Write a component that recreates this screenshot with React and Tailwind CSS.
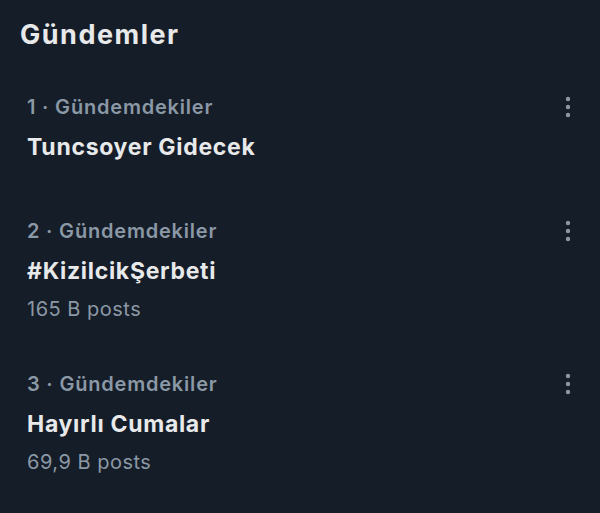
import { useState } from "react";

const trends = [
  { rank: 1, title: "Tuncsoyer Gidecek", posts: null, pad: "pt-[17px]" },
  { rank: 2, title: "#KizilcikŞerbeti", posts: "165 B posts", pad: "pt-[44px]" },
  { rank: 3, title: "Hayırlı Cumalar", posts: "69,9 B posts", pad: "pt-[37px]" },
];

function MoreDots() {
  return (
    <svg width="8" height="24" viewBox="0 0 8 24" className="text-[#8b98a5]">
      <circle cx="4" cy="4" r="2.2" fill="currentColor" />
      <circle cx="4" cy="12" r="2.2" fill="currentColor" />
      <circle cx="4" cy="20" r="2.2" fill="currentColor" />
    </svg>
  );
}

function TrendRow({ trend }) {
  return (
    <div className={`flex items-start justify-between pl-[27px] pr-[28px] ${trend.pad}`}>
      <div className="flex flex-col">
        <div className="text-[20px] leading-[40px] font-semibold tracking-[0.8px] text-[#8b98a5]">
          {trend.rank} · Gündemdekiler
        </div>
        <div className="text-[23px] leading-[40px] font-bold tracking-[0.7px] text-[#e7e9ea]">
          {trend.title}
        </div>
        {trend.posts && (
          <div className="text-[20px] leading-[36px] tracking-[0.5px] text-[#8b98a5]">
            {trend.posts}
          </div>
        )}
      </div>
      <div className="h-[40px] flex items-center">
        <MoreDots />
      </div>
    </div>
  );
}

export default function App() {
  const [items] = useState(trends);

  return (
    <main
      className="w-[600px] h-[513px] bg-[#151d28] overflow-hidden"
      style={{ fontFamily: "Inter, 'Noto Sans', sans-serif" }}
    >
      <div className="h-[70px] pt-[15px] pl-[20px]">
        <h1 className="text-[27px] leading-[40px] font-bold tracking-[1.5px] text-[#e7e9ea]">
          Gündemler
        </h1>
      </div>
      {items.map((t) => (
        <TrendRow key={t.rank} trend={t} />
      ))}
    </main>
  );
}
